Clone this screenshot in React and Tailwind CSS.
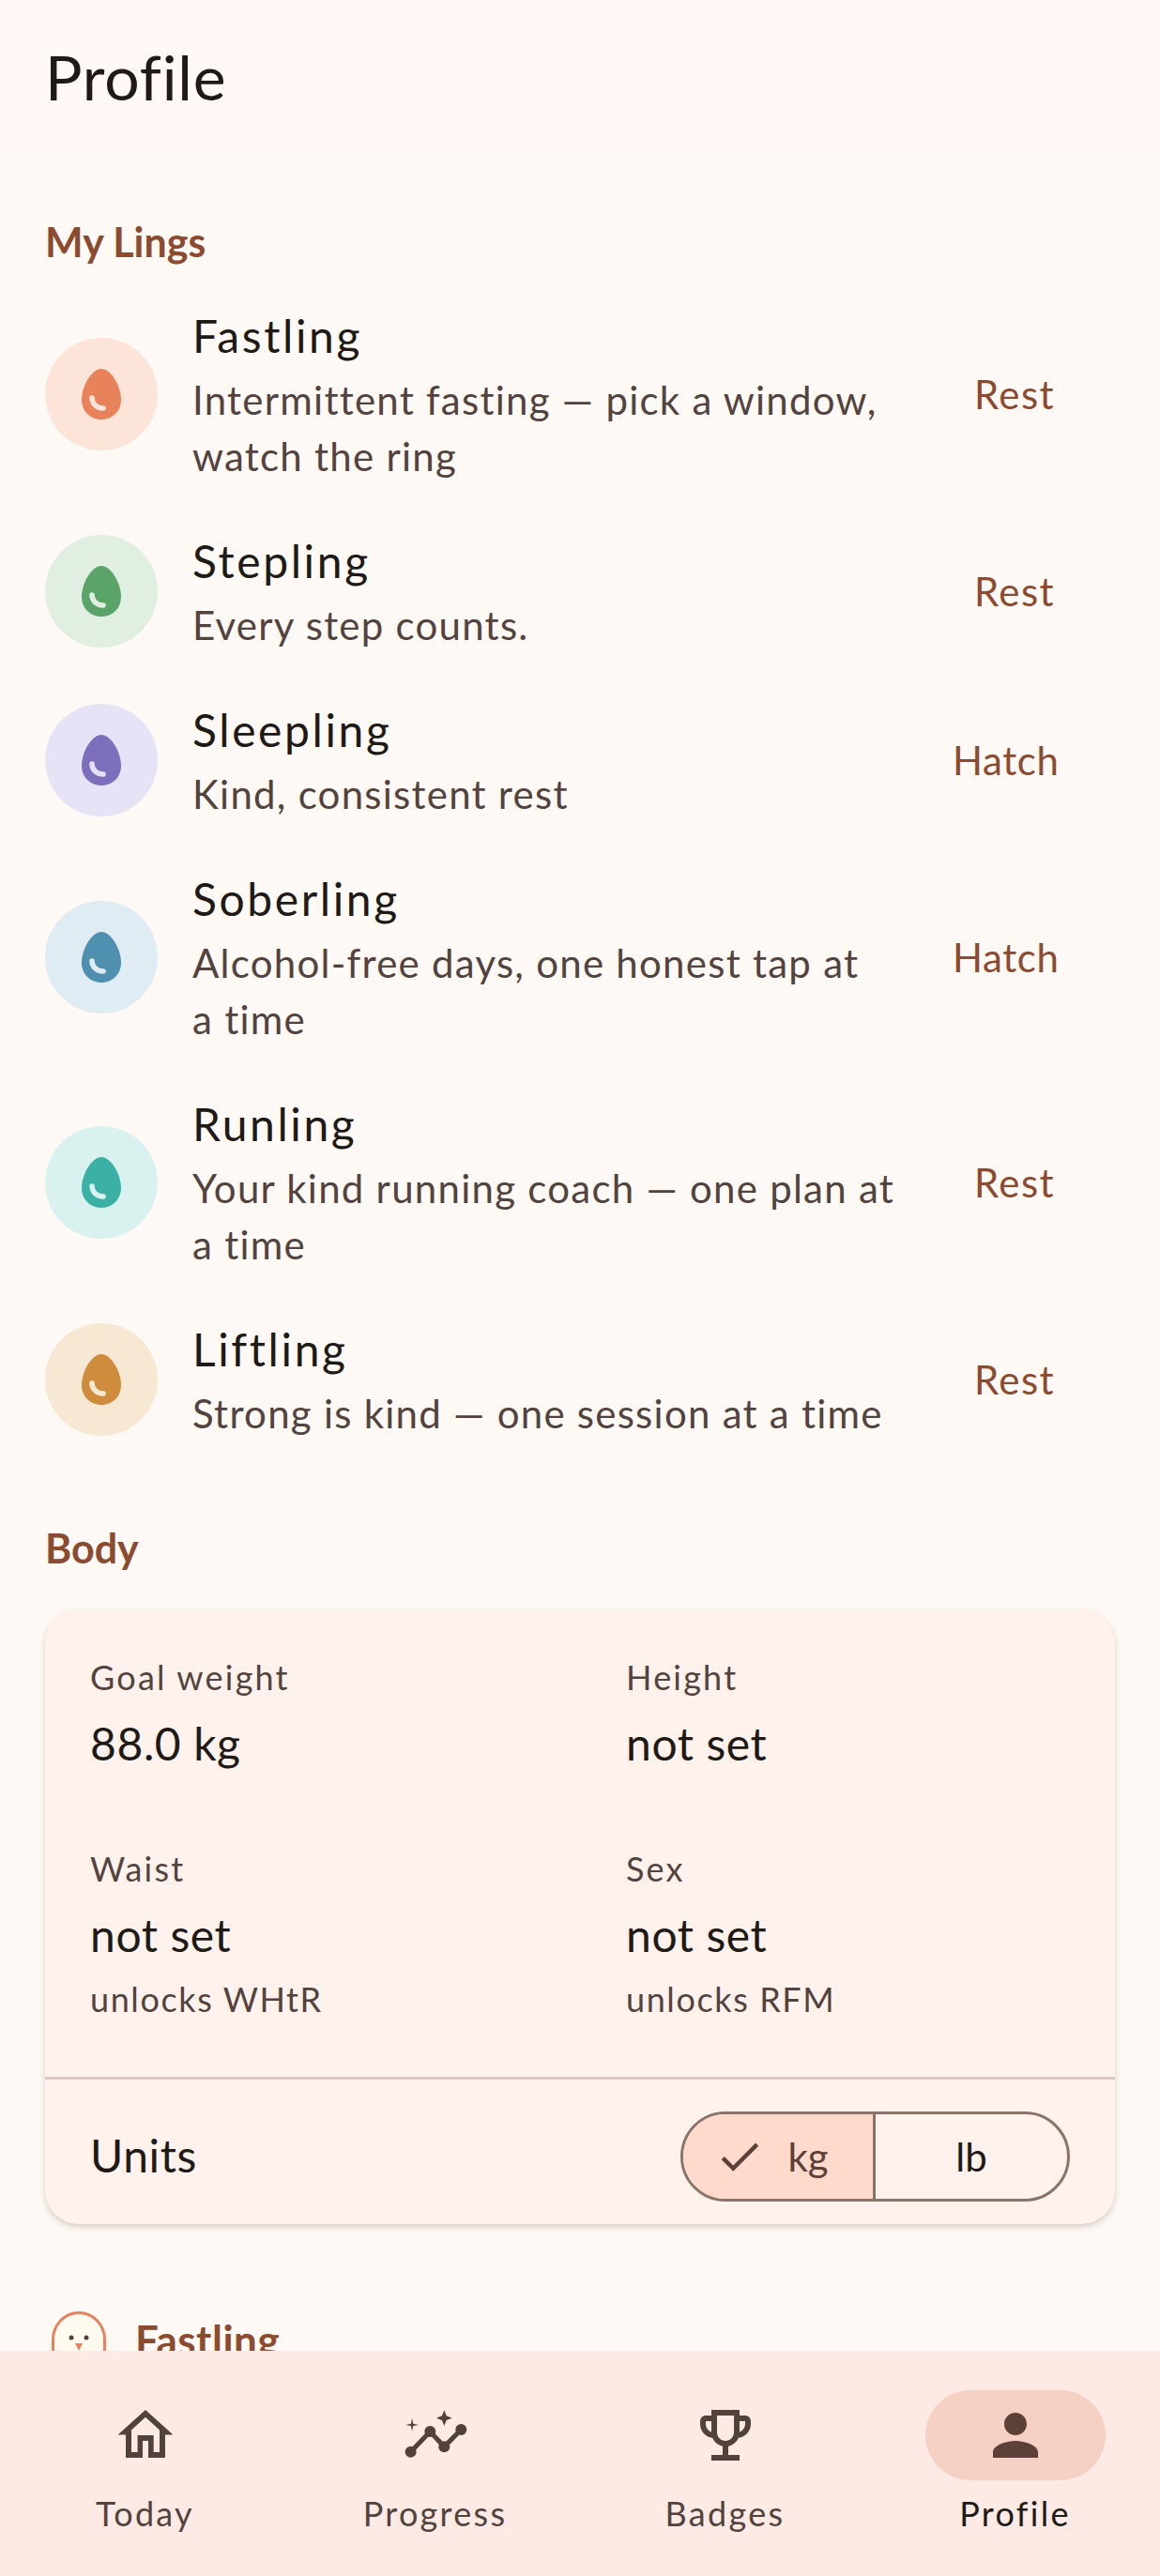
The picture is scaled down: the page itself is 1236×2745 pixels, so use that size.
const lings = [
  { name: 'Fastling', sub: ['Intermittent fasting — pick a window,', 'watch the ring'], action: 'Rest', bg: 'bg-[#fde4d9]', egg: '#e8825a', shine: '#fde4d9' },
  { name: 'Stepling', sub: ['Every step counts.'], action: 'Rest', bg: 'bg-[#e0efe2]', egg: '#5aa469', shine: '#e0efe2' },
  { name: 'Sleepling', sub: ['Kind, consistent rest'], action: 'Hatch', bg: 'bg-[#e6e3f6]', egg: '#7e6fbd', shine: '#e6e3f6' },
  { name: 'Soberling', sub: ['Alcohol-free days, one honest tap at', 'a time'], action: 'Hatch', bg: 'bg-[#dfecf3]', egg: '#4f8fb0', shine: '#dfecf3' },
  { name: 'Runling', sub: ['Your kind running coach — one plan at', 'a time'], action: 'Rest', bg: 'bg-[#daf2ef]', egg: '#3bb0a5', shine: '#daf2ef' },
  { name: 'Liftling', sub: ['Strong is kind — one session at a time'], action: 'Rest', bg: 'bg-[#f6e8d3]', egg: '#cf8c3c', shine: '#f6e8d3' },
];

function Egg({ color, shine }) {
  return (
    <svg width="42" height="54" viewBox="0 0 42 54">
      <path d="M21 0C31 0 42 18 42 33C42 45 33 54 21 54C9 54 0 45 0 33C0 18 11 0 21 0Z" fill={color} />
      <path d="M11 31C11 37 16 42 23 42" fill="none" stroke={shine} strokeWidth="5.5" strokeLinecap="round" />
    </svg>
  );
}

function LingRow({ ling }) {
  return (
    <div className="flex items-center py-6">
      <div className={`flex h-[120px] w-[120px] shrink-0 items-center justify-center rounded-full ${ling.bg}`}>
        <Egg color={ling.egg} shine={ling.shine} />
      </div>
      <div className="ml-[37px] w-[765px] shrink-0">
        <div className="-mt-[2px] mb-[2px] text-[48px] leading-[72px] tracking-[2.6px] text-[#201a17]">{ling.name}</div>
        {ling.sub.map((line) => (
          <div key={line} className="text-[42px] leading-[60px] tracking-[1.25px] text-[#53433e]">{line}</div>
        ))}
      </div>
      <div className={`text-[42px] leading-[60px] text-[#8c4a2f] ${ling.action === 'Rest' ? 'ml-[68px] tracking-[1.4px]' : 'ml-[45px] tracking-[0.6px]'}`}>
        {ling.action}
      </div>
    </div>
  );
}

function Stat({ label, value, hint }) {
  return (
    <div>
      <div className="text-[36px] leading-[48px] tracking-[2.2px] text-[#53433e]">{label}</div>
      <div className="mt-[11px] text-[48px] leading-[72px] tracking-[0.6px] text-[#201a17]">{value}</div>
      {hint && <div className="mt-2 text-[36px] leading-[48px] tracking-[1.6px] text-[#53433e]">{hint}</div>}
    </div>
  );
}

function HomeIcon() {
  return (
    <svg width="72" height="72" viewBox="0 0 24 24" fill="#51423c">
      <path fillRule="evenodd" d="M12 3L21.8 11.8H19V20H13V14H11V20H5V11.8H2.2ZM12 5.6L7 10.2V18H9.2V12H14.9V18H17V10.2Z" />
    </svg>
  );
}

function ProgressIcon() {
  return (
    <svg width="72" height="72" viewBox="0 0 24 24" fill="#51423c">
      <path d="M3.2 17.9L10.1 10.7L15.1 16.1L21.1 10" fill="none" stroke="#51423c" strokeWidth="1.7" />
      <circle cx="3.2" cy="17.9" r="2" />
      <circle cx="10.1" cy="10.7" r="2" />
      <circle cx="15.1" cy="16.1" r="2" />
      <circle cx="21.1" cy="10" r="2" />
      <path d="M15.1 3.1L15.9 5.1L17.9 5.9L15.9 6.7L15.1 8.7L14.3 6.7L12.3 5.9L14.3 5.1Z" />
      <path d="M3.7 6L4.1 7.9L6 8.3L4.1 8.7L3.7 10.6L3.3 8.7L1.4 8.3L3.3 7.9Z" />
    </svg>
  );
}

function TrophyIcon() {
  return (
    <svg width="72" height="72" viewBox="0 0 24 24" fill="#51423c">
      <path d="M19 5h-2V3H7v2H5c-1.1 0-2 .9-2 2v1c0 2.55 1.92 4.63 4.39 4.94.63 1.5 1.98 2.63 3.61 2.96V19H7v2h10v-2h-4v-3.1c1.63-.33 2.98-1.46 3.61-2.96C19.08 12.63 21 10.55 21 8V7c0-1.1-.9-2-2-2zM5 8V7h2v3.82C5.84 10.4 5 9.3 5 8zm7 6c-1.65 0-3-1.35-3-3V5h6v6c0 1.65-1.35 3-3 3zm7-6c0 1.3-.84 2.4-2 2.82V7h2v1z" />
    </svg>
  );
}

function PersonIcon() {
  return (
    <svg width="72" height="72" viewBox="0 0 24 24" fill="#5d4037">
      <path d="M12 12c2.21 0 4-1.79 4-4s-1.79-4-4-4-4 1.79-4 4 1.79 4 4 4zm0 2c-2.67 0-8 1.34-8 4v2h16v-2c0-2.66-5.33-4-8-4z" />
    </svg>
  );
}

function NavItem({ label, active, children }) {
  return (
    <div className="flex flex-1 flex-col items-center pt-[42px]">
      <div className={`flex h-24 w-48 items-center justify-center rounded-full ${active ? 'bg-[#f5d1c5]' : ''}`}>
        {children}
      </div>
      <div className={`mt-[11px] text-[36px] leading-[48px] tracking-[2.3px] ${active ? 'text-[#201a17]' : 'text-[#53433e]'}`}>
        {label}
      </div>
    </div>
  );
}

export default function App() {
  return (
    <div className="flex h-[2745px] flex-col overflow-hidden bg-[#fef9f5] font-['Lato',sans-serif]">
      <main className="min-h-0 flex-1 overflow-hidden">
        {/* Top bar */}
        <div className="flex h-[164px] items-center bg-[#fff8f5] px-12 text-[66px] leading-[80px] tracking-[0.8px] text-[#201a17]">Profile</div>

        <div className="px-12 pt-[64px]">
          <div className="text-[43px] font-bold leading-[60px] text-[#8c4a2f]">My Lings</div>
          <div className="mt-3">
            {lings.map((ling) => (
              <LingRow key={ling.name} ling={ling} />
            ))}
          </div>

          <div className="mt-[60px] text-[43px] font-bold leading-[60px] text-[#8c4a2f]">Body</div>

          {/* Body card */}
          <div className="mt-[35px] h-[655px] overflow-hidden rounded-[36px] bg-[#fff1ec] shadow-[0_3px_6px_rgba(80,50,40,0.22)]">
            <div className="grid h-[498px] grid-cols-2 gap-x-[98px] gap-y-[73px] content-start px-12 pt-12">
              <Stat label="Goal weight" value="88.0 kg" />
              <Stat label="Height" value="not set" />
              <Stat label="Waist" value="not set" hint="unlocks WHtR" />
              <Stat label="Sex" value="not set" hint="unlocks RFM" />
            </div>
            <div className="h-[3px] bg-[#dfc5bc]" />
            <div className="flex items-center justify-between pl-12 pr-12 pt-[34px]">
              <div className="-mt-[2px] text-[48px] leading-[72px] tracking-[0.6px] text-[#201a17]">Units</div>
              <div className="flex h-24 w-[415px] overflow-hidden rounded-full border-[3px] border-[#8a7469]">
                <div className="flex w-[205px] items-center justify-center gap-6 border-r-[3px] border-[#8a7469] bg-[#ffdacc] pr-[14px]">
                  <svg width="54" height="54" viewBox="0 0 24 24" fill="#5d4037">
                    <path d="M9 16.17 4.83 12l-1.42 1.41L9 19 21 7l-1.41-1.41z" />
                  </svg>
                  <span className="text-[42px] text-[#5d4037]">kg</span>
                </div>
                <div className="flex flex-1 items-center justify-center text-[42px] text-[#201a17]">lb</div>
              </div>
            </div>
          </div>

          {/* Next section, cut off by the nav bar */}
          <div className="mt-[93px] flex items-start">
            <svg className="ml-[7px] shrink-0" width="58" height="80" viewBox="0 0 58 80">
              <path d="M1.5 78V30C1.5 14 14 1.5 29 1.5C44 1.5 56.5 14 56.5 30V78Z" fill="#fffaf0" stroke="#e8825a" strokeWidth="3" />
              <circle cx="21" cy="28" r="2.5" fill="#51423c" />
              <circle cx="37" cy="28" r="2.5" fill="#51423c" />
              <path d="M25 34H33L29 42Z" fill="#e8825a" />
            </svg>
            <div className="ml-[31px] text-[44px] font-bold leading-[60px] tracking-[0.5px] text-[#8c4a2f]">Fastling</div>
          </div>
        </div>
      </main>

      <nav className="flex h-60 shrink-0 bg-[#fdeae4]">
        <NavItem label="Today"><HomeIcon /></NavItem>
        <NavItem label="Progress"><ProgressIcon /></NavItem>
        <NavItem label="Badges"><TrophyIcon /></NavItem>
        <NavItem label="Profile" active><PersonIcon /></NavItem>
      </nav>
    </div>
  );
}
